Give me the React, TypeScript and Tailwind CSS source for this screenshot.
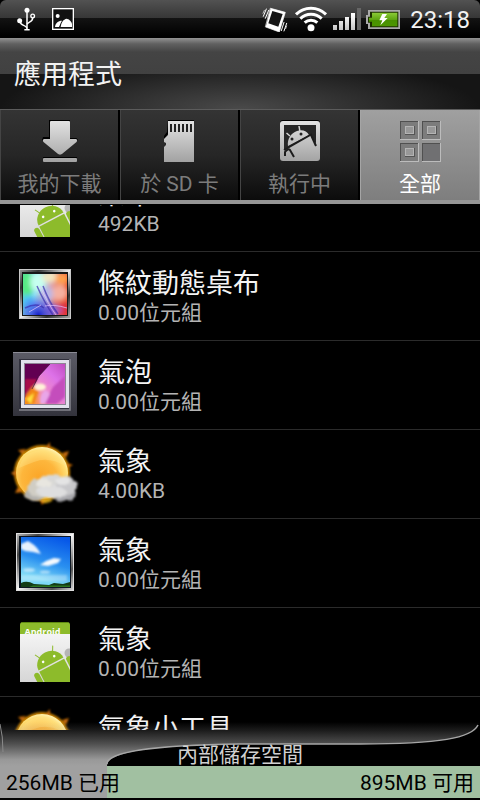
import { useState } from 'react'
import type { ReactNode } from 'react'

const GREEN = '#8dbb2b'

function UsbIcon() {
    return (
        <svg viewBox="48 18 60 72" className="w-5 h-6" fill="none" stroke="#fff" strokeWidth="4.500">
            <circle cx="81" cy="28" r="7.500" fill="#fff" stroke="none" />
            <path d="M81 28V86M73 86H89" />
            <circle cx="59" cy="59" r="7.500" fill="#fff" stroke="none" />
            <path d="M60 62C62 76 78 70 81 82M98 51C98 64 84 62 81 70" />
            <circle cx="98" cy="45" r="5.500" strokeWidth="4" />
        </svg>
    )
}

function PictureIcon() {
    return (
        <svg viewBox="156 24 66 66" className="w-[22px] h-[22px]">
            <rect x="158" y="26" width="62" height="62" fill="#111" stroke="#fff" strokeWidth="4" />
            <circle cx="173" cy="48" r="6" fill="#fff" />
            <path d="M165 81C166 70 174 62 186 62C182 68 180 74 177 81Z" fill="#fff" />
            <path d="M182 81C184 66 190 58 200 56C210 58 215 66 216 72V81Z" fill="#fff" />
        </svg>
    )
}

function VibrateIcon() {
    return (
        <svg viewBox="66 18 84 78" className="w-7 h-[26px]" fill="none" stroke="#fff" strokeLinecap="round">
            <path d="M92 25L136 37L118 96L77 81Z" fill="#fff" stroke="#fff" strokeWidth="2" strokeLinejoin="round" />
            <path d="M97 33L128 42L115 80L85 70Z" fill="#161616" stroke="none" />
            <path d="M79 27L70 49M86 31L76 55M132 67L124 92M140 70L132 93" strokeWidth="3" />
            <path d="M73 31L69 40M140 78L137 86" strokeWidth="2" />
        </svg>
    )
}

function WifiIcon() {
    return (
        <svg viewBox="163 18 102 84" className="w-[34px] h-7" fill="none" stroke="#fff" strokeWidth="9">
            <path d="M169 46A64 64 0 0 1 259 46" />
            <path d="M182 59A46 46 0 0 1 246 59" />
            <path d="M195 71A28 28 0 0 1 233 71" />
            <circle cx="214" cy="86" r="10.500" fill="#fff" stroke="none" />
        </svg>
    )
}

function SignalIcon() {
    return (
        <svg viewBox="276 30 90 72" className="w-[30px] h-6">
            <defs>
                <linearGradient id="sig" x1="0" y1="33" x2="0" y2="99" gradientUnits="userSpaceOnUse">
                    <stop offset="0.3" stopColor="#fff" />
                    <stop offset="1" stopColor="#c4c4c4" />
                </linearGradient>
            </defs>
            <rect x="279" y="84" width="12" height="15" fill="url(#sig)" />
            <rect x="297" y="72" width="12" height="27" fill="url(#sig)" />
            <rect x="315" y="60" width="12" height="39" fill="url(#sig)" />
            <rect x="333" y="48" width="12" height="51" fill="url(#sig)" />
            <rect x="351" y="33" width="12" height="66" fill="#666" />
        </svg>
    )
}

function BatteryIcon() {
    return (
        <svg viewBox="378 33 102 57" className="w-[34px] h-[19px]">
            <defs>
                <linearGradient id="bat" x1="0" y1="0" x2="0" y2="1">
                    <stop offset="0" stopColor="#8ccc38" />
                    <stop offset="0.5" stopColor="#5fa512" />
                    <stop offset="0.52" stopColor="#489000" />
                    <stop offset="1" stopColor="#4c9600" />
                </linearGradient>
            </defs>
            <path d="M384 33H480V90H384V75H378V48H384Z" fill="#a9a9a9" />
            <path d="M390 38H475V85H390V71H384V53H390Z" fill="#1d3000" />
            <path d="M396 41H472V82H396V68H387V56H396Z" fill="url(#bat)" />
            <path d="M427 45H441L433 57H443L421 79L427 64H418Z" fill="#fff" />
        </svg>
    )
}

function Metal() {
    return (
        <defs>
            <linearGradient id="metal" x1="0" y1="0" x2="0" y2="42" gradientUnits="userSpaceOnUse">
                <stop offset="0" stopColor="#e4e4e4" />
                <stop offset="1" stopColor="#a2a2a2" />
            </linearGradient>
        </defs>
    )
}

function DownloadIcon() {
    return (
        <svg viewBox="0 0 36 42" className="w-9 h-[42px]">
            <Metal />
            <path d="M7 0H28V18H34.500L36 20L20 34Q18 36 16 34L0 20L1 17H7Z" fill="#000" />
            <path d="M9 1H27Q28 1 28 2V19H34Q36 20 34.500 22L20 34Q18 35.500 16 34L1.500 22Q0 20 2 19H8V2Q8 1 9 1Z" fill="url(#metal)" />
            <rect x="1" y="37" width="34" height="4" fill="#000" />
            <rect x="1" y="38" width="34" height="4" rx="1" fill="url(#metal)" />
        </svg>
    )
}

function SdIcon() {
    return (
        <svg viewBox="0 0 32 42" className="w-8 h-[42px]">
            <Metal />
            <path d="M4 0H30V1H4V14L0 19V16L3 12Z" fill="#000" />
            <path d="M4 1H30V42H0V27L2 25V23L0 22V19L4 15Z" fill="url(#metal)" />
            <path d="M7 4V12M11 4V12M15 4V12M19 4V12M23 4V12M27 4V12" stroke="#222" strokeWidth="2" />
        </svg>
    )
}

function RunningIcon() {
    return (
        <svg viewBox="0 0 40 42" className="w-10 h-[42px]">
            <Metal />
            <rect x="0" y="0" width="40" height="40" rx="3" fill="#000" />
            <rect x="0" y="1" width="40" height="40" rx="3" fill="url(#metal)" />
            <rect x="4" y="5" width="32" height="31" fill="#262626" />
            <path d="M4 30L31 15L36 24V37H4Z" fill="url(#metal)" />
            <path d="M8 26C7 19 11 13 17 11C22 9 27 11 29 15Z" fill="url(#metal)" />
            <path d="M6.500 13L10 16M19 6L20 12" stroke="#d4d4d4" strokeWidth="1.500" />
            <path d="M4 30L32 14" stroke="#1c1c1c" strokeWidth="2" />
            <circle cx="12" cy="19" r="1.500" fill="#222" />
            <circle cx="21" cy="14" r="1.500" fill="#222" />
            <path d="M5 36V32Q8 28 10 30L14 37M31 15L36 26" fill="none" stroke="#1c1c1c" strokeWidth="2" />
            <path d="M32 14Q35 14 36 18V14Z" fill="#262626" />
        </svg>
    )
}

function GridIcon() {
    const cells = [[0, 0], [22, 0], [0, 22], [22, 22]]
    return (
        <svg viewBox="0 0 42 42" className="w-[42px] h-[42px]">
            {cells.map(([x, y], i) => (
                <g key={i} transform={`translate(${x} ${y})`}>
                    <rect x="1" y="1" width="19" height="19" fill="#bcbcbc" />
                    <rect x="1" y="1" width="18" height="18" fill="#505050" />
                    <rect x="2" y="2" width="17" height="17" fill={i === 3 ? '#707072' : '#7c7c7c'} />
                    {i < 3 && (
                        <>
                            <rect x="6" y="6" width="10" height="9" fill="#555" />
                            <rect x="6" y="6" width="9" height="8" fill="#b4b4b4" />
                            <rect x="7" y="7" width="7" height="6" fill="#989898" />
                        </>
                    )}
                </g>
            ))}
        </svg>
    )
}

function StripesArt() {
    return (
        <svg viewBox="0 0 72 72" className="size-[72px]">
            <defs>
                <linearGradient id="frame" x1="0" y1="0" x2="1" y2="1">
                    <stop offset="0" stopColor="#999" />
                    <stop offset="0.2" stopColor="#333" />
                    <stop offset="0.5" stopColor="#eee" />
                    <stop offset="0.75" stopColor="#333" />
                    <stop offset="1" stopColor="#aaa" />
                </linearGradient>
                <linearGradient id="rainbow" x1="0" y1="0" x2="1" y2="0.2">
                    <stop offset="0" stopColor="#4fd8a4" />
                    <stop offset="0.35" stopColor="#8adcf4" />
                    <stop offset="0.65" stopColor="#d7a0b0" />
                    <stop offset="1" stopColor="#e84a22" />
                </linearGradient>
                <radialGradient id="deep" cx="0.35" cy="1" r="0.5">
                    <stop offset="0" stopColor="#1420c8" />
                    <stop offset="0.6" stopColor="#4a5cf0" stopOpacity="0.6" />
                    <stop offset="1" stopColor="#5a8cf0" stopOpacity="0" />
                </radialGradient>
                <filter id="soft"><feGaussianBlur stdDeviation="2.500" /></filter>
                <filter id="soft0"><feGaussianBlur stdDeviation="0.600" /></filter>
                <clipPath id="stripeClip"><rect x="14" y="14" width="44" height="41" /></clipPath>
            </defs>
            <rect x="10.500" y="9.500" width="51" height="49" fill="url(#frame)" stroke="#c8c8c8" />
            <rect x="13" y="12" width="46" height="44" fill="#181818" />
            <g clipPath="url(#stripeClip)">
                <rect x="14" y="14" width="44" height="41" fill="url(#rainbow)" />
                <g filter="url(#soft)">
                    <ellipse cx="18" cy="24" rx="6" ry="12" fill="#55ea80" />
                    <ellipse cx="29" cy="22" rx="8" ry="10" fill="#c6fff0" />
                    <ellipse cx="41" cy="17" rx="8" ry="6" fill="#f3e6c0" />
                    <ellipse cx="53" cy="19" rx="7" ry="6" fill="#ffa04e" />
                    <ellipse cx="50" cy="33" rx="9" ry="8" fill="#f5b0a0" />
                    <ellipse cx="38" cy="34" rx="6" ry="8" fill="#b8b8e8" />
                    <ellipse cx="56" cy="49" rx="5" ry="8" fill="#e0303c" />
                    <ellipse cx="19" cy="42" rx="6" ry="7" fill="#4cc0f8" />
                    <ellipse cx="45" cy="50" rx="8" ry="6" fill="#b058b8" />
                </g>
                <rect x="14" y="14" width="44" height="41" fill="url(#deep)" />
                <g filter="url(#soft0)" fill="none">
                    <path d="M28 26Q35 42 44 55M34 26Q40 42 49 54M16 48Q28 42 35 48" stroke="#3a2cae" strokeWidth="1.500" opacity="0.700" />
                    <path d="M36 46Q45 44 58 48M31 26Q39 44 47 55M20 52L32 45" stroke="#e3c4ff" strokeWidth="1" opacity="0.700" />
                </g>
            </g>
        </svg>
    )
}

function BubblesArt() {
    return (
        <svg viewBox="0 0 72 72" className="size-[72px]">
            <defs>
                <linearGradient id="slab" x1="0" y1="0" x2="0" y2="1">
                    <stop offset="0" stopColor="#5b5b66" />
                    <stop offset="1" stopColor="#33333c" />
                </linearGradient>
                <linearGradient id="petal" x1="0" y1="1" x2="1" y2="0">
                    <stop offset="0" stopColor="#ff9a14" />
                    <stop offset="0.4" stopColor="#f08cc8" />
                    <stop offset="0.7" stopColor="#dd72e8" />
                    <stop offset="1" stopColor="#c04cc0" />
                </linearGradient>
                <filter id="soft1"><feGaussianBlur stdDeviation="1.200" /></filter>
                <clipPath id="petalClip"><rect x="16" y="15" width="40" height="40" /></clipPath>
            </defs>
            <rect x="4" y="3" width="64" height="64" fill="url(#slab)" />
            <path d="M4 3.500H68" stroke="#8c8c96" />
            <rect x="10" y="10" width="51" height="51" fill="#30303c" />
            <path d="M10 61H61V10" fill="none" stroke="#85858d" strokeWidth="1.500" />
            <rect x="12" y="11" width="48" height="48" fill="#e2e2ec" />
            <rect x="15" y="14" width="42" height="42" fill="#8f8495" />
            <g clipPath="url(#petalClip)">
                <rect x="16" y="15" width="40" height="40" fill="url(#petal)" />
                <path d="M16 15H41L30 27L23 40L16 49Z" fill="#620052" />
                <g filter="url(#soft1)">
                    <path d="M16 30L28 30L22 44L16 47Z" fill="#a80c48" />
                    <path d="M16 47L24 37L30 42L25 55H16Z" fill="#f28614" />
                    <path d="M17 50L25 44L22 55Z" fill="#ffe03c" />
                    <path d="M35 55L44 38L56 27V48L48 55Z" fill="#c44ebc" />
                    <path d="M31 55Q30 44 37 41L41 45L36 55Z" fill="#e9a6e8" />
                    <ellipse cx="31" cy="38" rx="6" ry="3.500" fill="#fff1d8" />
                </g>
                <path d="M41 15L30 27L23 40" fill="none" stroke="#3b1038" strokeWidth="0.700" />
            </g>
        </svg>
    )
}

function WeatherArt() {
    return (
        <svg viewBox="0 0 72 72" className="size-[72px]">
            <defs>
                <radialGradient id="sun" cx="0.45" cy="0.6" r="0.62">
                    <stop offset="0" stopColor="#fba526" />
                    <stop offset="0.55" stopColor="#fdb63c" />
                    <stop offset="0.85" stopColor="#ffdc70" />
                    <stop offset="1" stopColor="#fff6bc" />
                </radialGradient>
                <filter id="glow" x="-30%" y="-30%" width="160%" height="160%"><feGaussianBlur stdDeviation="1.300" /></filter>
                <filter id="puff" x="-20%" y="-20%" width="140%" height="140%">
                    <feTurbulence type="fractalNoise" baseFrequency="0.180" numOctaves="2" seed="4" result="n" />
                    <feDisplacementMap in="SourceGraphic" in2="n" scale="5" xChannelSelector="R" yChannelSelector="G" />
                    <feGaussianBlur stdDeviation="0.900" />
                </filter>
            </defs>
            <g filter="url(#glow)">
                <circle cx="33" cy="35" r="28" fill="#c98200" />
                <path d="M36 10L41 4L41 11ZM53 15L60 13L57 20ZM13 16L9 12L17 11ZM7 32L2 35L8 40ZM30 60L33 67L39 60ZM9 49L6 55L14 54ZM58 25L64 27L58 30Z" fill="#c56a08" />
            </g>
            <circle cx="33" cy="35" r="26" fill="url(#sun)" />
            <path d="M10 30Q14 13 33 12Q51 13 56 28Q40 18 25 24Q14 28 10 30Z" fill="#ffe48c" opacity="0.350" />
            <g filter="url(#puff)">
                <ellipse cx="26" cy="57" rx="11" ry="6" fill="#b2b1ae" />
                <ellipse cx="54" cy="56" rx="13" ry="7" fill="#a9a9ad" />
                <ellipse cx="31" cy="50" rx="13" ry="9" fill="#d0cdc4" />
                <ellipse cx="44" cy="46" rx="15" ry="10" fill="#d8d8d6" />
                <ellipse cx="58" cy="48" rx="10" ry="10" fill="#c8c8cb" />
                <ellipse cx="42" cy="54" rx="15" ry="6" fill="#dededf" />
                <ellipse cx="54" cy="43" rx="7" ry="4" fill="#e4e4e4" />
                <ellipse cx="35" cy="45" rx="7" ry="4" fill="#e8e6e0" />
            </g>
            <path d="M31 62Q38 58 44 62Q40 66 35 65Z" fill="#e8b31a" filter="url(#glow)" opacity="0.800" />
        </svg>
    )
}

function SkyArt() {
    return (
        <svg viewBox="0 0 72 72" className="size-[72px]">
            <defs>
                <linearGradient id="silver" x1="0" y1="0" x2="1" y2="1">
                    <stop offset="0" stopColor="#bbb" />
                    <stop offset="0.2" stopColor="#444" />
                    <stop offset="0.5" stopColor="#f6f6f6" />
                    <stop offset="0.8" stopColor="#555" />
                    <stop offset="1" stopColor="#ddd" />
                </linearGradient>
                <linearGradient id="sky" x1="0.7" y1="0" x2="0.4" y2="1">
                    <stop offset="0" stopColor="#0758e8" />
                    <stop offset="0.5" stopColor="#2a90f0" />
                    <stop offset="0.85" stopColor="#7cd8f6" />
                </linearGradient>
                <filter id="soft2"><feGaussianBlur stdDeviation="1" /></filter>
                <clipPath id="skyClip"><rect x="12" y="10" width="49" height="50" /></clipPath>
            </defs>
            <rect x="7.500" y="6.500" width="57" height="57" fill="url(#silver)" stroke="#dedede" />
            <rect x="10" y="9" width="52" height="52" fill="#0c1622" />
            <g clipPath="url(#skyClip)">
                <rect x="12" y="10" width="49" height="50" fill="url(#sky)" />
                <g filter="url(#soft2)" fill="#fff">
                    <path d="M12 17L19 14L25 18L28 21L32 27L24 25L16 24L12 22Z" opacity="0.900" />
                    <path d="M31 38L37 34L45 31L52 32L49 36L39 39Z" opacity="0.950" />
                    <ellipse cx="20" cy="43" rx="6" ry="2" opacity="0.500" />
                    <ellipse cx="36" cy="45" rx="5" ry="1.500" opacity="0.500" />
                    <path d="M12 48H58V54H12Z" opacity="0.300" />
                </g>
                <path d="M12 56Q18 53 25 57L40 58L45 56L54 57L61 55V60H12Z" fill="#123c16" />
                <path d="M24 58.500H61V60H20Z" fill="#2c7420" />
            </g>
        </svg>
    )
}

function AndroidArt() {
    return (
        <svg viewBox="0 0 72 72" className="size-[72px]">
            <defs>
                <linearGradient id="paper" x1="0" y1="0" x2="0" y2="1">
                    <stop offset="0" stopColor="#f4f4f4" />
                    <stop offset="1" stopColor="#d6d6d6" />
                </linearGradient>
                <clipPath id="card"><rect x="11" y="18" width="50" height="48" /></clipPath>
                <clipPath id="band"><rect x="11" y="6" width="50" height="12" /></clipPath>
            </defs>
            <path d="M11 18V9Q11 6 14 6H58Q61 6 61 9V18Z" fill={GREEN} />
            <path d="M13 6.500H59" stroke="#5f8a10" />
            <text x="15.500" y="19" fontSize="9" fontWeight="700" fill="#fff" fontFamily="'Open Sans', sans-serif" clipPath="url(#band)">
                Android
            </text>
            <rect x="11" y="18" width="50" height="48" fill="url(#paper)" />
            <g clipPath="url(#card)">
                <circle cx="60" cy="37" r="4.500" fill="#b5b5b5" />
                <g transform="translate(42 48) rotate(-27.500)" fill={GREEN}>
                    <path d="M-14 0A14 13 0 0 1 14 0Z" />
                    <path d="M-7 -10L-10 -15.500M7 -10L10 -15.500" stroke={GREEN} strokeWidth="1" />
                    <circle cx="-6" cy="-5.500" r="1.300" fill="#fff" />
                    <circle cx="6.500" cy="-5.500" r="1.300" fill="#fff" />
                    <path d="M-14 1.500H14V40H-14Z" />
                    <rect x="-20.500" y="1" width="5.500" height="24" rx="2.700" />
                    <rect x="15.500" y="1" width="5.500" height="24" rx="2.700" />
                </g>
            </g>
        </svg>
    )
}

const tabs: { id: string; label: string; icon: ReactNode }[] = [
    { id: 'downloads', label: '我的下載', icon: <DownloadIcon /> },
    { id: 'sd', label: '於 SD 卡', icon: <SdIcon /> },
    { id: 'running', label: '執行中', icon: <RunningIcon /> },
    { id: 'all', label: '全部', icon: <GridIcon /> },
]

const apps: { name: string; size: string; icon: ReactNode }[] = [
    { name: '桌布', size: '492KB', icon: <AndroidArt /> },
    { name: '條紋動態桌布', size: '0.00位元組', icon: <StripesArt /> },
    { name: '氣泡', size: '0.00位元組', icon: <BubblesArt /> },
    { name: '氣象', size: '4.00KB', icon: <WeatherArt /> },
    { name: '氣象', size: '0.00位元組', icon: <SkyArt /> },
    { name: '氣象', size: '0.00位元組', icon: <AndroidArt /> },
    { name: '氣象小工具', size: '0.00位元組', icon: <WeatherArt /> },
]

const storage = { used: 256, free: 895 }

function StatusBar() {
    return (
        <div className="h-[38px] shrink-0 flex items-center justify-between pl-4 pr-[10px] rounded-t-md bg-[linear-gradient(#525252,#363636_18px,#131313_18px,#000_36px)]">
            <div className="flex items-center gap-4">
                <UsbIcon />
                <PictureIcon />
            </div>
            <div className="flex items-center gap-1">
                <VibrateIcon />
                <WifiIcon />
                <SignalIcon />
                <BatteryIcon />
                <span className="ml-1.5 pt-0.5 text-2xl text-[#f2f2f2]">23:18</span>
            </div>
        </div>
    )
}

function StorageFooter() {
    const usedPercent = (storage.used / (storage.used + storage.free)) * 100

    return (
        <footer className="relative shrink-0 bg-black pb-0.5">
            {/* curved shade that runs up over the end of the list */}
            <svg viewBox="0 0 480 44" preserveAspectRatio="none" className="absolute -top-2 left-0 w-full h-11 pointer-events-none">
                <defs>
                    <linearGradient id="shade" x1="0" y1="0" x2="0" y2="44" gradientUnits="userSpaceOnUse">
                        <stop offset="0" stopColor="#a0a0a0" stopOpacity="0" />
                        <stop offset="0.2" stopColor="#a0a0a0" stopOpacity="0.180" />
                        <stop offset="0.5" stopColor="#a0a0a0" stopOpacity="0.500" />
                        <stop offset="0.85" stopColor="#a0a0a0" stopOpacity="0.950" />
                        <stop offset="1" stopColor="#a0a0a0" />
                    </linearGradient>
                </defs>
                <path d="M0 0H480L478 3C472 16 440 22 360 22H240C160 23 107 29 107 44H0Z" fill="url(#shade)" />
                <path d="M478 3C472 16 440 22 360 22H240C160 23 107 29 107 42" fill="none" stroke="#a6a6a6" strokeWidth="1.500" />
                <path d="M0 2Q3 14 3 30" fill="none" stroke="#8a8a8a" strokeWidth="1" />
            </svg>
            <h2 className="relative h-9 pt-[13px] text-center text-[21px] leading-6 text-[#d0d0d0]">內部儲存空間</h2>
            <div className="relative h-8 bg-[#a1c0a1] text-[21px] leading-8 text-black">
                <div className="absolute inset-y-0 left-0 bg-[#a0a0a0]" style={{ width: `${usedPercent}%` }} />
                <div className="relative flex justify-between px-1.5 pt-px">
                    <span>{storage.used}MB 已用</span>
                    <span>{storage.free}MB 可用</span>
                </div>
            </div>
        </footer>
    )
}

export default function App() {
    const [activeTab, setActiveTab] = useState('all')

    return (
        <div className="h-screen flex flex-col bg-black text-white overflow-hidden font-[Roboto,'Noto_Sans_CJK_TC',sans-serif]">
            <StatusBar />

            <header className="h-[72px] shrink-0 flex items-center px-3.5 pt-0.5 border-b border-[#5c5c5c] bg-[linear-gradient(#939393,#606060_6px,#444_14px,#414141_36px,transparent_36px),radial-gradient(ellipse_50%_70%_at_50%_100%,#4a4a4a,#151515)]">
                <h1 className="text-[27px] leading-9 text-[#f2f2f2]">應用程式</h1>
            </header>

            <nav role="tablist" className="shrink-0 grid grid-cols-4 bg-[linear-gradient(#333,#000)] border-b-4 border-[#969696]">
                {tabs.map((tab) => (
                    <button
                        key={tab.id}
                        role="tab"
                        aria-selected={tab.id === activeTab}
                        onClick={() => setActiveTab(tab.id)}
                        className={
                            tab.id === activeTab
                                ? 'flex flex-col items-center pt-[10px] pb-px border-x border-[#a5a5a5] bg-[linear-gradient(#a0a0a0,#7e7e7e)] text-white'
                                : 'flex flex-col items-center pt-[10px] pb-px border-l border-r-2 border-l-[#444] border-r-black bg-[linear-gradient(#343434,#262626_50%,#0c0c0c)] text-[#7c7c7c]'
                        }
                    >
                        {tab.icon}
                        <span className="mt-[7px] text-[21px] leading-[30px]">{tab.label}</span>
                    </button>
                ))}
            </nav>

            <main className="flex-1 min-h-0 overflow-hidden mt-px">
                <ul className="-mt-[42px]">
                    {apps.map((app, i) => (
                        <li key={i} className="border-b border-[#2b2b2b]">
                            <button className="w-full h-[88px] flex items-center gap-[17px] px-[9px] text-left">
                                {app.icon}
                                <span className="flex flex-col pt-1">
                                    <span className="text-[27px] leading-[30px] text-[#f4f4f4]">{app.name}</span>
                                    <span className="text-[21px] leading-7 text-[#b4b4b4]">{app.size}</span>
                                </span>
                            </button>
                        </li>
                    ))}
                </ul>
            </main>

            <StorageFooter />
        </div>
    )
}
